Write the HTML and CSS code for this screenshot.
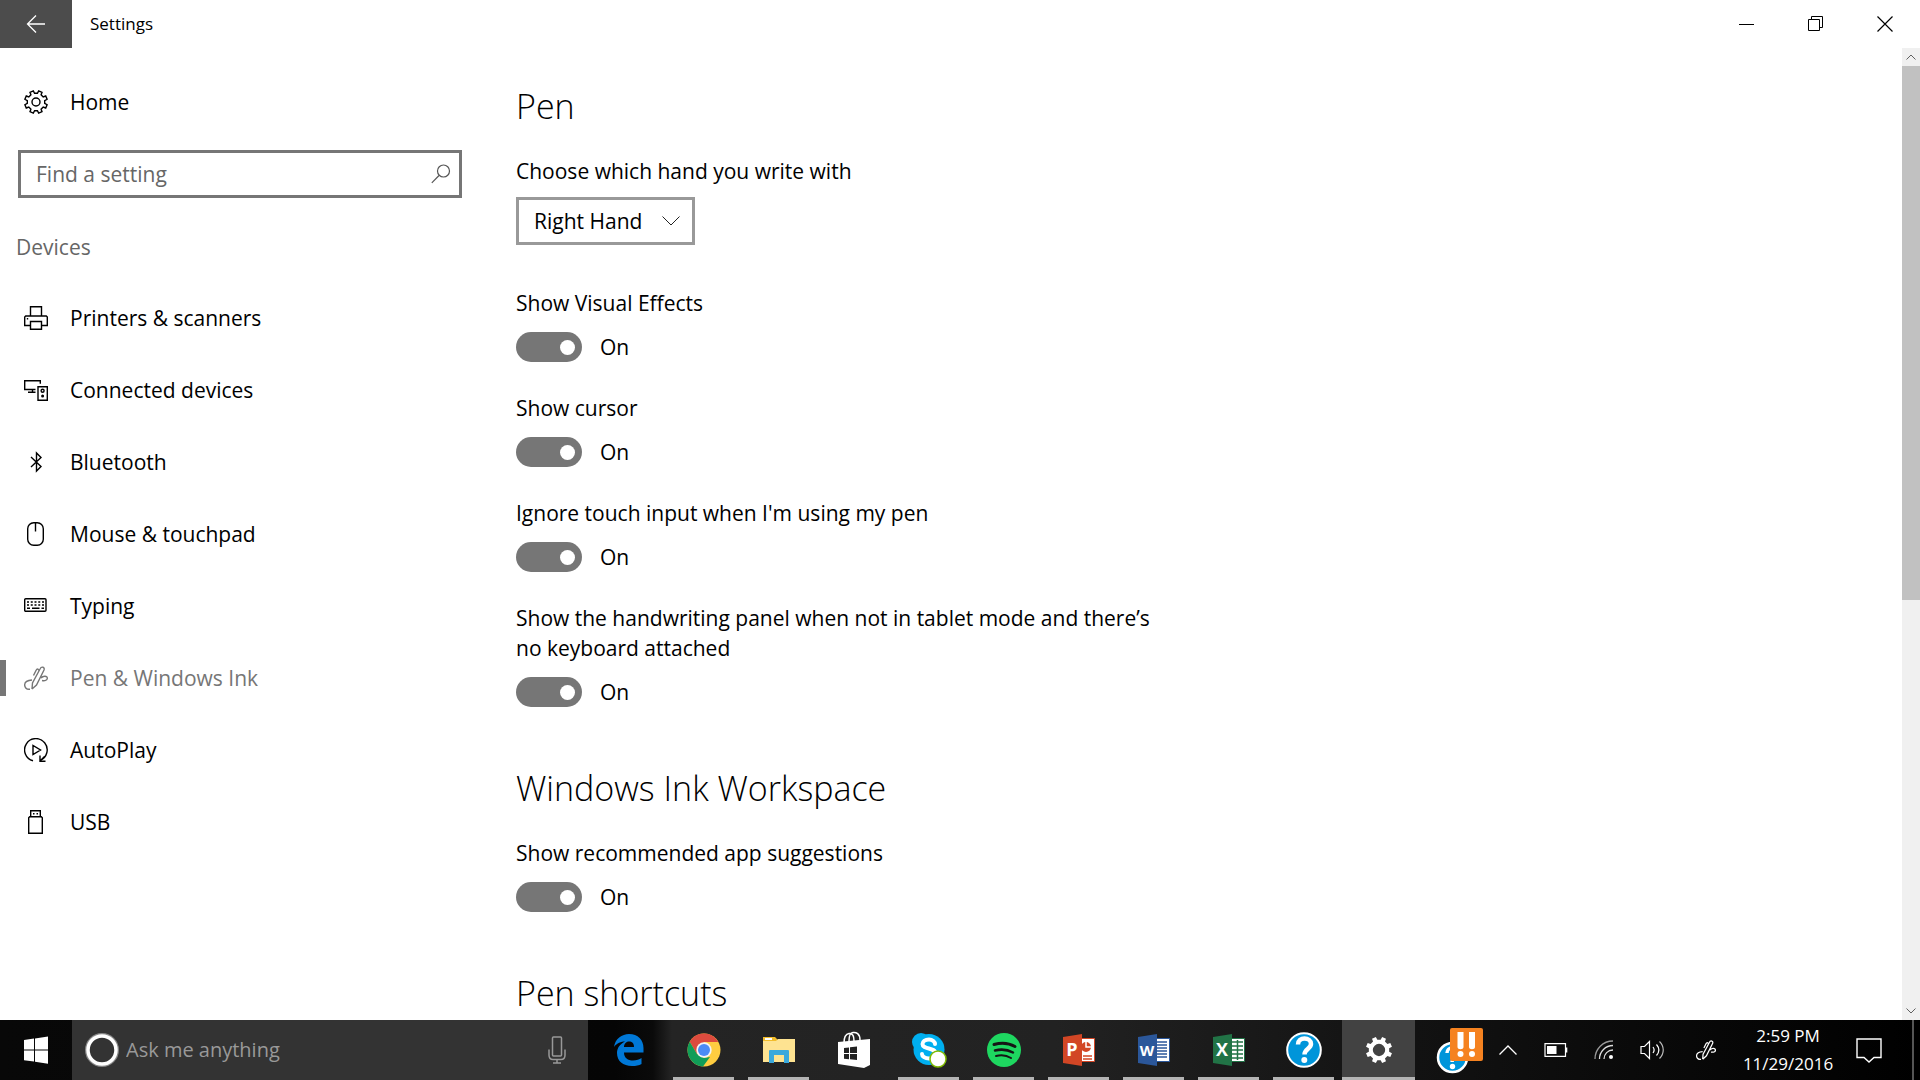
FILE: index.html
```html
<!DOCTYPE html>
<html lang="en">

<head>
    <meta charset="UTF-8">
    <meta name="viewport" content="width=device-width, initial-scale=1.0">
    <title>Settings</title>
    <link rel="stylesheet" href="styles.css">
</head>

<body>
    <header class="titlebar">
        <button class="back" aria-label="Back">
            <svg width="20" height="20" viewBox="0 0 20 20" fill="none" stroke="#fff" stroke-width="1.3"><path d="M19 10H1.500M10 1.500L1.500 10l8.500 8.500"/></svg>
        </button>
        <span class="title">Settings</span>
        <div class="window-buttons">
            <button aria-label="Minimize">
                <svg width="16" height="16" viewBox="0 0 16 16" fill="none" stroke="#000"><path d="M0 8.500h15"/></svg>
            </button>
            <button aria-label="Restore">
                <svg width="16" height="16" viewBox="0 0 16 16" fill="none" stroke="#000"><path d="M.5 3.500h11v11H.5zM3.500 3.500v-3h11v11h-3"/></svg>
            </button>
            <button aria-label="Close">
                <svg width="16" height="16" viewBox="0 0 16 16" fill="none" stroke="#000" stroke-width="1.200"><path d="M.5.5l15 15M15.500.5l-15 15"/></svg>
            </button>
        </div>
    </header>

    <div class="window">
        <nav class="sidebar">
            <a class="nav-item home" href="#">
                <svg class="icon" viewBox="0 0 24 24"><path d="M20.700 13.400L23.100 14.700 21.700 18 19.200 17.100 17.100 19.200 18 21.700 14.700 23.100 13.400 20.700H10.600L9.300 23.100 6 21.700 6.900 19.200 4.800 17.100 2.300 18 .9 14.700 3.300 13.400V10.600L.9 9.300 2.300 6 4.800 6.900 6.900 4.800 6 2.300 9.300.9 10.600 3.300H13.400L14.700.9 18 2.300 17.100 4.800 19.200 6.900 21.700 6 23.100 9.300 20.700 10.600z"/><circle cx="12" cy="12" r="4"/></svg>
                Home
            </a>

            <div class="find">
                <input type="text" placeholder="Find a setting" aria-label="Find a setting">
                <svg width="20" height="20" viewBox="0 0 20 20" fill="none" stroke="#555" stroke-width="1.200"><circle cx="12.500" cy="7" r="6"/><path d="M8 11.500L.8 18.800"/></svg>
            </div>

            <h2 class="group">Devices</h2>

            <a class="nav-item" href="#">
                <svg class="icon" viewBox="0 0 24 24"><path d="M6.500 10V.7h11V10M6 19.500H.7V11l1-1h20.600l1 1v8.500H18M6.500 15.500h11v7.800h-11z"/><path d="M3.500 12v1.500"/></svg>
                Printers &amp; scanners
            </a>
            <a class="nav-item" href="#">
                <svg class="icon" viewBox="0 0 24 24"><path d="M11.500 11.500H.7V2.700h15.600v3M8.500 11.500v3M4 14.200h7.500M14 8.700h9.300v13.600H14z"/><circle cx="18.600" cy="12.800" r="1.500"/><circle cx="18.600" cy="18" r=".8"/></svg>
                Connected devices
            </a>
            <a class="nav-item" href="#">
                <svg class="icon" viewBox="0 0 24 24"><path d="M7 7l10 9.500-4.500 4.500V3L17 7.500 7 17"/></svg>
                Bluetooth
            </a>
            <a class="nav-item" href="#">
                <svg class="icon" viewBox="0 0 24 24"><rect x="3.700" y=".7" width="15.600" height="22.600" rx="6"/><path d="M11.500 1v8.500"/></svg>
                Mouse &amp; touchpad
            </a>
            <a class="nav-item" href="#">
                <svg class="icon" viewBox="0 0 24 24"><rect x=".7" y="4.700" width="21.300" height="12.600" rx="1"/><path d="M3 8h17M3 11h17" stroke-dasharray="2 1.750"/><path d="M3 14.200h3M8 14.200h7.500M17.500 14.200h2.500"/></svg>
                Typing
            </a>
            <a class="nav-item active" href="#">
                <svg class="icon" viewBox="0 0 24 24"><path d="M8 23l.5-6L16 3c1.500-3 5-2 4 1l-7.500 15L8 23M15 4.500c-1-2-2-2-3 0l-2.500 5M6 23.300C2 23.500.5 21 .7 18.500 1 15 4 14.300 8 14M17 12c2-2.500 6.500-2.500 6.300.5-.2 2-2.500 2.500-5.300 2"/></svg>
                Pen &amp; Windows Ink
            </a>
            <a class="nav-item" href="#">
                <svg class="icon" viewBox="0 0 24 24"><path d="M9 22.800A11.300 11.300 0 1 1 16 22.400M16 17.500v5.700h5.500M16 23l4.500-4.500M9 7.500v9l7.500-4.500z"/></svg>
                AutoPlay
            </a>
            <a class="nav-item" href="#">
                <svg class="icon" viewBox="0 0 24 24"><path d="M6.700 6.500V.7h9.600v5.800M4.700 7.700l1-1h11.600l1 1v15.600H4.700z"/><path d="M9 3.800h1.500M12.500 3.800H14"/></svg>
                USB
            </a>
        </nav>

        <main class="content">
            <section>
                <h1>Pen</h1>
                <div class="hand">
                    <label for="hand">Choose which hand you write with</label>
                    <div class="dropdown">
                        <select id="hand">
                            <option>Right Hand</option>
                            <option>Left Hand</option>
                        </select>
                        <svg width="18" height="10" viewBox="0 0 18 10" fill="none" stroke="#222"><path d="M.5.5L9 9 17.500.5"/></svg>
                    </div>
                </div>
                <div class="setting">
                    <label for="effects">Show Visual Effects</label>
                    <div class="switch"><input type="checkbox" id="effects" checked><span>On</span></div>
                </div>
                <div class="setting">
                    <label for="cursor">Show cursor</label>
                    <div class="switch"><input type="checkbox" id="cursor" checked><span>On</span></div>
                </div>
                <div class="setting">
                    <label for="touch">Ignore touch input when I'm using my pen</label>
                    <div class="switch"><input type="checkbox" id="touch" checked><span>On</span></div>
                </div>
                <div class="setting">
                    <label for="panel">Show the handwriting panel when not in tablet mode and there’s no keyboard attached</label>
                    <div class="switch"><input type="checkbox" id="panel" checked><span>On</span></div>
                </div>
            </section>
            <section>
                <h1>Windows Ink Workspace</h1>
                <div class="setting">
                    <label for="suggestions">Show recommended app suggestions</label>
                    <div class="switch"><input type="checkbox" id="suggestions" checked><span>On</span></div>
                </div>
            </section>
            <section>
                <h1>Pen shortcuts</h1>
            </section>
        </main>

        <div class="scrollbar">
            <button aria-label="Scroll up"><svg width="10" height="6" viewBox="0 0 10 6" fill="none" stroke="#606060"><path d="M.5 5.500L5 1l4.500 4.500"/></svg></button>
            <div class="track"><div class="thumb"></div></div>
            <button aria-label="Scroll down"><svg width="10" height="6" viewBox="0 0 10 6" fill="none" stroke="#606060"><path d="M.5.5L5 5 9.500.5"/></svg></button>
        </div>
    </div>

    <footer class="taskbar">
        <button class="start" aria-label="Start">
            <svg width="24" height="28" viewBox="0 0 24 28" fill="#fff"><path d="M0 4l10-1.400v11H0zM11 2.400L24 .5v13.100H11zM0 14.600h10v11L0 24.200zM11 14.600h13v13.100l-13-1.900z"/></svg>
        </button>
        <div class="cortana">
            <svg width="36" height="40" viewBox="0 0 36 40" fill="none"><circle cx="18" cy="20" r="15.500" stroke="#888" stroke-width="3"/><circle cx="18" cy="20" r="14" stroke="#fff" stroke-width="3.500"/></svg>
            <input type="text" placeholder="Ask me anything" aria-label="Ask me anything">
            <button aria-label="Speak">
                <svg width="18" height="28" viewBox="0 0 18 28" fill="none" stroke="#999" stroke-width="1.500"><rect x="4.500" y="1" width="9" height="19" rx="1"/><path d="M1 13.500V19c0 3 2 4.500 4 4.500h8c2 0 4-1.500 4-4.500v-5.500M9 23.500V27M5 27h8"/></svg>
            </button>
        </div>

        <div class="apps">
            <button aria-label="Microsoft Edge">
                <svg width="32" height="32" viewBox="0 0 32 32" fill="#0078d7" fill-rule="evenodd"><path d="M1 13C2 5 9 0 16 0c9 0 14.500 6 14.500 14v4.500H11c0 5.500 4 8 9 8 3.500 0 6.500-1 8.500-2.500v6c-2.500 1.500-5.500 2-9.500 2C10 32 4 27 4 19c0-5 3-9 8-11.500C8 7.500 4 9 1 13zM11 13h10c0-4-2-5.500-5-5.500s-5 2.500-5 5.500z"/></svg>
            </button>
            <button class="open" aria-label="Google Chrome">
                <svg width="34" height="34" viewBox="0 0 34 34"><circle cx="17" cy="17" r="16.500" fill="#ffcd40"/><path d="M2.700 8.700A16.500 16.500 0 0 1 31.300 9H17l-7 12z" fill="#dd4b3e"/><path d="M2.700 8.700L10 21l7 4 6-1-7 9.500A16.500 16.500 0 0 1 2.700 8.700z" fill="#109d58"/><circle cx="17" cy="17" r="7.700" fill="#f4f4f4"/><circle cx="17" cy="17" r="6" fill="#4b8bf5"/></svg>
            </button>
            <button class="open" aria-label="File Explorer">
                <svg width="34" height="28" viewBox="0 0 34 28"><path d="M1 1h12l3 3h16v6H1z" fill="#f2bd2c"/><path d="M3 2h7v2H3z" fill="#fff"/><path d="M1 5h13l2-2h17v23H1z" fill="#fee391"/><path d="M7 27V15a1 1 0 0 1 1-1h18a1 1 0 0 1 1 1v12h-5v-8H12v8z" fill="#3ba9dc"/></svg>
            </button>
            <button aria-label="Store">
                <svg width="34" height="38" viewBox="0 0 34 38"><path d="M7 12C7 5 9 3 12 2.500c4-.5 5 3 5 7.500M12 10c0-6 1-8 4-8.500s7 1 7 7.500" fill="none" stroke="#fff" stroke-width="1.500"/><path d="M1 11l32-3v26l-6 3L1 33z" fill="#fff"/><path d="M7 17l5-.6v5.600H7zM13 16.300l7-.8V22h-7zM7 23h5v5.300l-5-.5zM13 23h7v6l-7-.7z" fill="#222"/></svg>
            </button>
            <button class="open" aria-label="Skype">
                <svg width="36" height="36" viewBox="0 0 36 36"><circle cx="10" cy="10" r="9" fill="#00aff0"/><circle cx="18" cy="17.500" r="15.500" fill="#00aff0"/><path d="M24 12c0-2-2.500-4.500-6-4.500-4 0-6.500 2-6.500 4.500 0 6 13 3 13 9.500 0 3-3 5-6.500 5-4 0-7-2-7-4.500" fill="none" stroke="#fff" stroke-width="4" stroke-linecap="round"/><circle cx="27" cy="27" r="8" fill="#fff" stroke="#7fba00" stroke-width="1.500"/></svg>
            </button>
            <button class="open" aria-label="Spotify">
                <svg width="34" height="34" viewBox="0 0 34 34" fill="none" stroke="#151515" stroke-linecap="round"><circle cx="17" cy="17" r="17" fill="#1ed760" stroke="none"/><path d="M7 11.500c7-2 15-1.500 21 2" stroke-width="3"/><path d="M8 17.500c6-1.500 12.500-1 18 2" stroke-width="2.500"/><path d="M9 23c5-1.200 10.500-.8 15 2" stroke-width="2"/></svg>
            </button>
            <button class="open" aria-label="PowerPoint">
                <svg width="32" height="32" viewBox="0 0 32 32"><path d="M18 4.500h13.500v23H18z" fill="#fff" stroke="#d24625"/><path d="M20 22h9M20 25h9" stroke="#d24625" stroke-width="1.500"/><circle cx="23" cy="13" r="5" fill="#d24625"/><path d="M23 7.500V13h6" fill="none" stroke="#fff" stroke-width="1.500"/><path d="M0 3l19-3v32L0 29z" fill="#d24625"/><text x="9" y="22" text-anchor="middle" class="tile-letter">P</text></svg>
            </button>
            <button class="open" aria-label="Word">
                <svg width="32" height="32" viewBox="0 0 32 32"><path d="M18 4.500h13.500v23H18z" fill="#fff" stroke="#2b579a"/><path d="M19 8h10M19 11h10M19 14h10M19 17h10M19 20h10M19 23h10" stroke="#2b579a" stroke-width="1.500"/><path d="M0 3l19-3v32L0 29z" fill="#2b579a"/><text x="9" y="22" text-anchor="middle" class="tile-letter wide">W</text></svg>
            </button>
            <button class="open" aria-label="Excel">
                <svg width="32" height="32" viewBox="0 0 32 32"><path d="M18 4.500h13.500v23H18z" fill="#fff" stroke="#217346"/><path d="M19 8h11M19 12h11M19 16h11M19 20h11M19 24h11M24.500 6v20" stroke="#217346" stroke-width="1.500"/><path d="M0 3l19-3v32L0 29z" fill="#217346"/><text x="9" y="22" text-anchor="middle" class="tile-letter">X</text></svg>
            </button>
            <button class="open" aria-label="Get Help">
                <svg width="36" height="36" viewBox="0 0 36 36"><circle cx="18" cy="18" r="16.800" fill="#0095da" stroke="#fff" stroke-width="2"/><path d="M12 12.500c0-4 3-6 6.500-6s6.500 2 6.500 5.500c0 4.500-6.500 5-6.500 10.500" fill="none" stroke="#fff" stroke-width="4.500"/><circle cx="18.300" cy="28" r="3" fill="#fff"/></svg>
            </button>
            <button class="open current" aria-label="Settings">
                <svg width="28" height="28" viewBox="0 0 24 24"><path fill="#fff" fill-rule="evenodd" d="M20.700 13.400L23.100 14.700 21.700 18 19.200 17.100 17.100 19.200 18 21.700 14.700 23.100 13.400 20.700H10.600L9.300 23.100 6 21.700 6.900 19.200 4.800 17.100 2.300 18 .9 14.700 3.300 13.400V10.600L.9 9.300 2.300 6 4.800 6.900 6.900 4.800 6 2.300 9.300.9 10.600 3.300H13.400L14.700.9 18 2.300 17.100 4.800 19.200 6.900 21.700 6 23.100 9.300 20.700 10.600zM12 6.700a5.300 5.300 0 1 0 0 10.600 5.300 5.300 0 0 0 0-10.600z"/></svg>
            </button>
        </div>

        <div class="tray">
            <button aria-label="Help alerts">
                <svg width="48" height="48" viewBox="0 0 48 48"><circle cx="16.500" cy="31.500" r="14.500" fill="#0095da" stroke="#fff" stroke-width="2.500"/><path d="M11 27c0-3 2-5 5-5s5 2 5 5c0 4-5 5-5 9" fill="none" stroke="#fff" stroke-width="3.500"/><circle cx="16.500" cy="40.500" r="2.700" fill="#fff"/><rect x="14" y="2" width="33" height="33" rx="2" fill="#f58220"/><path d="M21.500 6h6v15c0 3-6 3-6 0zM33 6h6v15c0 3-6 3-6 0z" fill="#fff"/><circle cx="24.500" cy="28" r="3" fill="#fff"/><circle cx="36" cy="28" r="3" fill="#fff"/></svg>
            </button>
            <button aria-label="Show hidden icons">
                <svg width="18" height="10" viewBox="0 0 18 10" fill="none" stroke="#fff" stroke-width="1.300"><path d="M.5 9.500L9 1l8.500 8.500"/></svg>
            </button>
            <button aria-label="Battery">
                <svg width="24" height="14" viewBox="0 0 24 14"><path d="M1 .7h20.500v12.600H1zM22.700 4.500v5" fill="none" stroke="#fff" stroke-width="1.200"/><path d="M3 3h9.500v8H3z" fill="#fff"/></svg>
            </button>
            <button aria-label="Network">
                <svg width="20" height="20" viewBox="0 0 20 20" fill="none" stroke="#999" stroke-width="1.300"><path d="M1 19C1 9 9 1 19 1"/><path d="M5.500 19c0-7.500 6-13.500 13.500-13.500M10 19c0-5 4-9 9-9" stroke="#ddd"/><circle cx="17" cy="17" r="2" fill="#fff" stroke="none"/></svg>
            </button>
            <button aria-label="Volume">
                <svg width="24" height="20" viewBox="0 0 24 20" fill="none" stroke="#fff" stroke-width="1.200"><path d="M1 6.500h3.500L9.500 1.500v17l-5-5H1zM13 7c1.500 2 1.500 4 0 6M16.500 4.500c3 3.500 3 7.500 0 11"/><path d="M19.500 1.500c5 5 5 12 0 17" stroke="#bbb"/></svg>
            </button>
            <button class="ink" aria-label="Windows Ink Workspace">
                <svg width="20" height="20" viewBox="0 0 24 24" fill="none" stroke="#fff" stroke-width="1.500"><path d="M8 23l.5-6L16 3c1.500-3 5-2 4 1l-7.500 15L8 23M15 4.500c-1-2-2-2-3 0l-2.500 5M6 23.300C2 23.500.5 21 .7 18.500 1 15 4 14.300 8 14M17 12c2-2.500 6.500-2.500 6.300.5-.2 2-2.500 2.500-5.300 2"/></svg>
            </button>
            <button class="clock"><span>2:59 PM</span><span>11/29/2016</span></button>
            <button class="notifications" aria-label="Action Center">
                <svg width="26" height="26" viewBox="0 0 26 26" fill="none" stroke="#fff" stroke-width="1.400"><path d="M1 2h24v18.500h-7L13 25l-5-4.500H1z"/></svg>
            </button>
            <button class="show-desktop" aria-label="Show desktop"></button>
        </div>
    </footer>
</body>

</html>
```

FILE: styles.css
```css
*{
    margin: 0;
    padding: 0;
    box-sizing: border-box;
}
body{
    height: 100vh;
    display: flex;
    flex-direction: column;
    overflow: hidden;
    background-color: #fff;
    color: #000;
    font-family: "Open Sans", "Noto Sans", sans-serif;
    font-size: 21px;
    line-height: 30px;
}
button, input, select{
    font: inherit;
    color: inherit;
    border: none;
    background: none;
}
button{
    display: flex;
    justify-content: center;
    align-items: center;
}
svg{
    display: block;
    flex: none;
}

/* title bar */
.titlebar{
    display: flex;
    align-items: center;
    height: 48px;
}
.back{
    width: 72px;
    height: 48px;
    background-color: #4c4c4c;
}
.title{
    padding-left: 18px;
    font-size: 17px;
}
.window-buttons{
    display: flex;
    margin-left: auto;
    padding-right: 1px;
}
.window-buttons button{
    width: 69px;
    height: 48px;
}

.window{
    flex: 1;
    min-height: 0;
    display: flex;
}

/* left menu */
.sidebar{
    flex: 0 0 480px;
    padding-top: 18px;
}
.nav-item{
    display: flex;
    align-items: center;
    gap: 22px;
    height: 72px;
    padding-left: 24px;
    color: inherit;
    text-decoration: none;
}
.icon{
    width: 24px;
    height: 24px;
    fill: none;
    stroke: currentColor;
    stroke-width: 1.4;
}
.active{
    color: #767676;
    background: linear-gradient(#767676, #767676) left center / 6px 36px no-repeat;
}
.find{
    display: flex;
    align-items: center;
    height: 48px;
    margin: 12px 18px 0;
    padding: 0 8px 0 15px;
    border: 3px solid #767676;
}
.find input{
    flex: 1;
    min-width: 0;
    outline: none;
}
.find input::placeholder{
    color: #666;
    opacity: 1;
}
.group{
    margin: 34px 0 20px;
    padding-left: 16px;
    font-size: 21px;
    font-weight: normal;
    color: #666;
}

/* settings */
.content{
    flex: 1;
    min-width: 0;
    padding: 36px 36px 0;
    overflow: hidden;
}
h1{
    margin-bottom: 28px;
    font-size: 34px;
    font-weight: 300;
    line-height: 44px;
}
label{
    display: block;
    max-width: 660px;
}
.dropdown{
    display: grid;
    align-items: center;
    width: 179px;
    margin-top: 11px;
}
.dropdown select{
    grid-area: 1 / 1;
    height: 48px;
    padding-left: 15px;
    border: 3px solid #999;
    appearance: none;
}
.dropdown svg{
    grid-area: 1 / 1;
    justify-self: end;
    margin-right: 15px;
    pointer-events: none;
}
.hand{
    margin-bottom: 43px;
}
.setting{
    margin-bottom: 31px;
}
section .setting:last-child{
    margin-bottom: 59px;
}
.switch{
    display: flex;
    align-items: center;
    gap: 18px;
    margin-top: 14px;
}
.switch input{
    display: flex;
    justify-content: flex-end;
    align-items: center;
    width: 66px;
    height: 30px;
    padding-right: 7px;
    border-radius: 15px;
    background-color: #767676;
    appearance: none;
}
.switch input::before{
    content: "";
    width: 15px;
    height: 15px;
    border-radius: 50%;
    background-color: #fff;
}

.scrollbar{
    display: flex;
    flex-direction: column;
    width: 18px;
    background-color: #f0f0f0;
}
.scrollbar button{
    height: 18px;
}
.track{
    flex: 1;
}
.thumb{
    height: 57%;
    background-color: #c1c1c1;
}

/* taskbar */
.taskbar{
    display: flex;
    height: 60px;
    color: #fff;
    background: linear-gradient(to right, #080808 0, #050505 32%, #0a0a0a 34%, #242424 35%, #222 55%, #141414 71%, #0a0a0a 85%, #000 100%);
}
.start{
    width: 72px;
}
.cortana{
    flex: 0 1 516px;
    display: flex;
    align-items: center;
    padding: 0 22px 0 12px;
    background-color: #333;
}
.cortana input{
    flex: 1;
    min-width: 0;
    padding-left: 6px;
    font-size: 20px;
    outline: none;
}
.cortana input::placeholder{
    color: #999;
    opacity: 1;
}
.apps{
    display: flex;
    gap: 2px;
    margin-left: 4px;
}
.apps button{
    width: 73px;
}
.open{
    background: linear-gradient(#b4b4b4, #b4b4b4) center bottom / 61px 3px no-repeat;
}
.current{
    background-color: #424242;
    background-size: 100% 3px;
}
.tile-letter{
    font-size: 18px;
    font-weight: 700;
    fill: #fff;
}
.wide{
    font-size: 15px;
}
.tray{
    display: flex;
    margin-left: auto;
}
.tray button{
    width: 48px;
}
.tray .ink{
    width: 60px;
}
.tray .clock{
    width: 104px;
    flex-direction: column;
    font-size: 17px;
    line-height: 28px;
}
.tray .notifications{
    width: 58px;
    margin-right: 14px;
}
.tray .show-desktop{
    width: 8px;
    border-left: 2px solid #555;
}
```
